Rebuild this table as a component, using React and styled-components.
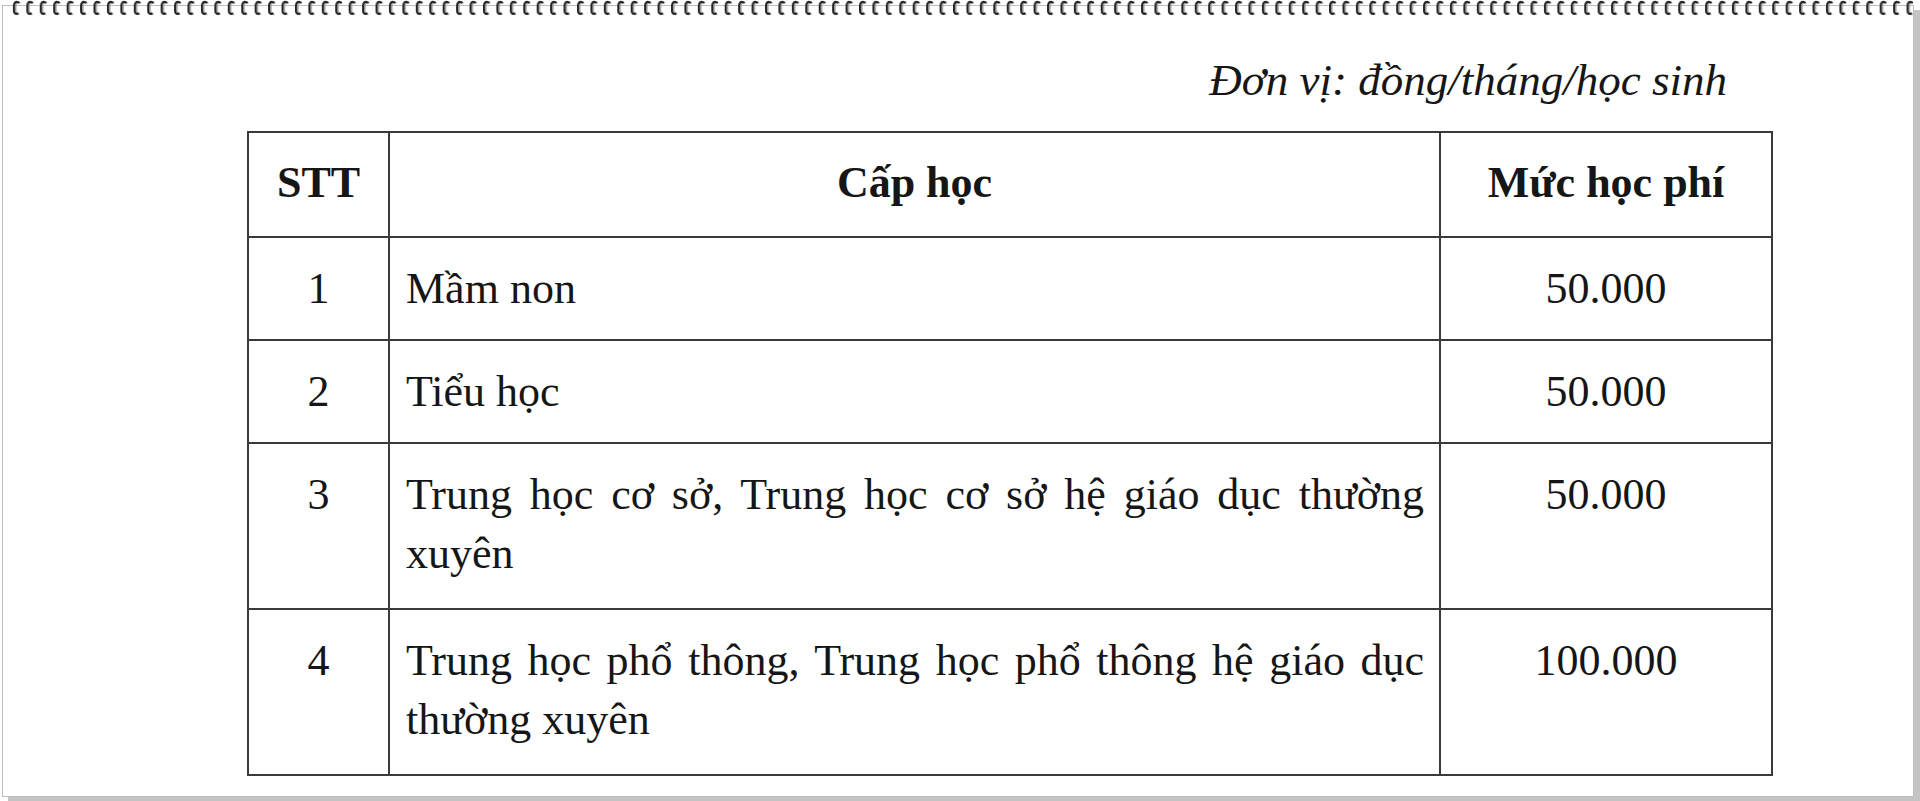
import React from 'react';
import styled, { createGlobalStyle } from 'styled-components';

const GlobalStyle = createGlobalStyle`
	html, body {
		margin: 0;
		padding: 0;
		background: #ffffff;
	}
	body {
		font-family: "Liberation Serif", "Times New Roman", serif;
		color: #161616;
	}
`;

const Frame = styled.div`
	position: relative;
	width: 1920px;
	height: 801px;
	overflow: hidden;
`;

const Sheet = styled.div`
	box-sizing: border-box;
	width: 1912px;
	height: 792px;
	margin: 5px 0 0 2px;
	padding: 45px 0 0 244px;
	background: #ffffff;
	border: 1px solid #bdbdbd;
	box-shadow: 6px 5px 0 #c4c4c4;
`;

const Binding = styled.svg`
	position: absolute;
	top: 0;
	left: 0;
	pointer-events: none;
`;

const Content = styled.div`
	width: 1524px;
`;

const Unit = styled.div`
	padding-right: 44px;
	margin-bottom: 21px;
	text-align: right;
	font-size: 45px;
	font-style: italic;
	line-height: 59px;
`;

const Table = styled.table`
	width: 1524px;
	border-collapse: collapse;
	table-layout: fixed;
	font-size: 44px;
	line-height: 59px;
`;

const Col = styled.col`
	width: ${(p) => p.$w}px;
`;

const Row = styled.tr`
	height: ${(p) => p.$h}px;
`;

const Head = styled.th`
	border: 2px solid #3a3a3a;
	padding: 0 0 4px;
	font-weight: bold;
	text-align: center;
	vertical-align: middle;
`;

const Cell = styled.td`
	border: 2px solid #3a3a3a;
	padding: 21px ${(p) => (p.$align === 'justify' ? '15px 0 16px' : '0')};
	text-align: ${(p) => p.$align || 'center'};
	vertical-align: top;
`;

const rows = [
	{ no: 1, name: 'Mầm non', fee: '50.000', h: 100 },
	{ no: 2, name: 'Tiểu học', fee: '50.000', h: 102 },
	{
		no: 3,
		name: 'Trung học cơ sở, Trung học cơ sở hệ giáo dục thường xuyên',
		fee: '50.000',
		h: 166,
	},
	{
		no: 4,
		name: 'Trung học phổ thông, Trung học phổ thông hệ giáo dục thường xuyên',
		fee: '100.000',
		h: 166,
	},
];

const SpiralBinding = () => (
	<Binding width="1920" height="18" viewBox="0 0 1920 18">
		<defs>
			<pattern id="ring" x="11" y="0" width="13.43" height="18" patternUnits="userSpaceOnUse">
				<path
					d="M8 2.6 C5 1.2 3.6 2.6 3.6 5.8 L3.6 11.2 C3.6 13.6 5 14.6 7 13.6"
					fill="none"
					stroke="#a9a9a9"
					strokeWidth="1.4"
					transform="translate(1.2 0.6)"
				/>
				<path
					d="M7.6 2.4 C4.6 1 3 2.4 3 5.6 L3 11 C3 13.4 4.4 14.4 6.4 13.4"
					fill="none"
					stroke="#262626"
					strokeWidth="2.2"
					strokeLinecap="round"
				/>
			</pattern>
		</defs>
		<rect x="11" y="0" width="1902" height="18" fill="url(#ring)" />
	</Binding>
);

export default function App() {
	return (
		<Frame>
			<GlobalStyle />
			<Sheet>
				<Content>
					<Unit>Đơn vị: đồng/tháng/học sinh</Unit>
					<Table>
						<colgroup>
							<Col $w={141} />
							<Col $w={1051} />
							<Col $w={332} />
						</colgroup>
						<thead>
							<Row $h={105}>
								<Head>STT</Head>
								<Head>Cấp học</Head>
								<Head>Mức học phí</Head>
							</Row>
						</thead>
						<tbody>
							{rows.map((r) => (
								<Row key={r.no} $h={r.h}>
									<Cell>{r.no}</Cell>
									<Cell $align="justify">{r.name}</Cell>
									<Cell>{r.fee}</Cell>
								</Row>
							))}
						</tbody>
					</Table>
				</Content>
			</Sheet>
			<SpiralBinding />
		</Frame>
	);
}
